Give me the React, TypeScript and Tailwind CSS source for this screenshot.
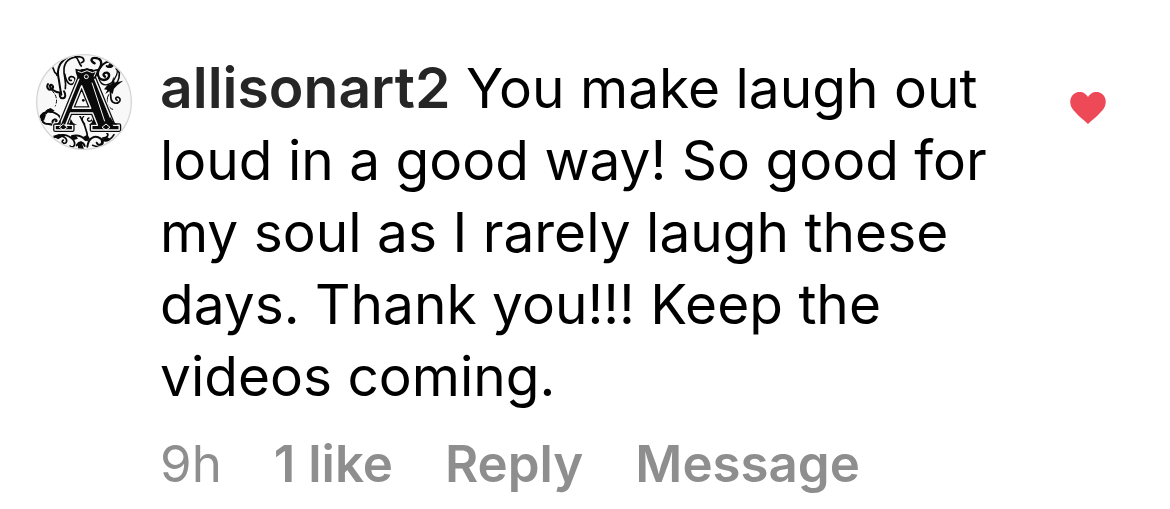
const actions = ["1 like", "Reply", "Message"];

function Avatar() {
  return (
    <svg
      viewBox="18 18 288 288"
      className="mt-0.5 size-24 shrink-0"
      role="img"
      aria-label="allisonart2"
    >
      <defs>
        <clipPath id="avatar-circle">
          <circle cx="162" cy="162" r="141" />
        </clipPath>
      </defs>
      <circle cx="162" cy="162" r="142" fill="#f8f8f8" />
      <g clipPath="url(#avatar-circle)">
        <g fill="none" stroke="#0a0a0a" strokeWidth="5" strokeLinecap="round">
          {/* top left stem and curls */}
          <path d="M146 26C118 28 104 42 102 62C100 84 110 98 106 122" />
          <path d="M116 26C86 42 80 66 86 92C89 108 90 122 94 140" strokeWidth="6" />
          <path d="M104 78C110 110 124 114 132 104C140 94 132 84 122 86C114 89 116 99 124 97" />
          <path d="M92 132C86 140 90 152 99 151C108 149 107 138 102 130" strokeWidth="6" />
          <path d="M66 56C70 60 71 64 73 70C74 76 82 76 81 82" />
          <path d="M90 134C72 132 58 120 60 112C64 106 74 116 66 123C56 130 48 118 54 108" strokeWidth="6" />
          <path d="M66 128C82 144 82 160 76 174" strokeWidth="3" strokeDasharray="9 7" />
          <path d="M146 26C164 28 166 40 154 44M136 26C148 34 146 48 154 54" />
          {/* right branch */}
          <path d="M194 46C178 38 184 28 198 30C218 32 216 52 208 62C198 80 206 96 222 96C238 95 242 78 231 74C221 73 217 82 225 86" strokeWidth="7" />
          <path d="M210 60C220 44 236 36 246 46C248 56 236 60 230 54" strokeWidth="6" />
          <path d="M206 90C214 120 242 114 254 92C264 76 266 68 258 62" strokeWidth="4" />
          <path d="M268 78C268 98 262 106 248 112M238 118C248 140 236 152 248 162C262 172 276 158 268 150C261 143 252 152 261 157" />
          <path d="M236 140C224 162 236 182 248 184" strokeWidth="3" />
          {/* left scroll */}
          <path d="M30 208C42 188 62 186 80 198C98 208 92 230 78 232C66 231 64 217 74 214C80 214 82 220 77 221" strokeWidth="6" />
          <path d="M34 214C46 240 62 218 76 238M48 196C54 180 64 184 64 192" strokeWidth="6" />
          {/* thin stem below the crossbar */}
          <path d="M144 194C160 222 172 244 174 278" />
          <path d="M164 228C150 216 158 204 168 200C182 196 194 208 184 218C174 224 168 212 177 210" strokeWidth="4" />
          {/* bottom scrolls */}
          <path d="M66 274C88 252 116 260 130 276C140 292 128 302 120 294M88 262C106 264 114 276 108 284C100 290 92 280 100 276" />
          <path d="M126 264C144 260 158 266 166 276M140 292C150 278 160 282 164 294M172 296C176 268 196 260 212 272C224 286 206 298 200 284" strokeWidth="6" />
          <path d="M188 292C212 302 222 290 218 276C230 284 244 274 252 260M218 270C232 270 238 262 230 254" />
        </g>
        <g fill="#0a0a0a">
          <path d="M232 58C238 40 250 36 254 46C252 58 242 64 232 58ZM222 124L232 112L244 108L250 86L254 104L280 98L262 112L252 122L248 138L238 130L226 138L232 126ZM260 62L274 66L268 82ZM32 200L40 192L48 200L42 218L32 216ZM46 188L62 180L74 188L60 194ZM68 264L88 258L98 266L84 274ZM120 266L136 260L144 272L132 276ZM158 268L172 260L180 272L168 280ZM216 272L230 266L240 272L226 280ZM246 228L276 230L272 246L258 252L244 246ZM144 286L154 280L162 304L144 304Z" />
        </g>
        {/* ornamental initial: dark edge, light inline, dark face */}
        <g
          fontFamily="'DejaVu Serif', serif"
          fontWeight="bold"
          fontSize="242"
          textAnchor="middle"
          strokeLinejoin="round"
        >
          <text x="171" y="245" fill="#0a0a0a" stroke="#f8f8f8" strokeWidth="18">A</text>
          <text x="171" y="245" fill="#0a0a0a" stroke="#0a0a0a" strokeWidth="12">A</text>
          <text x="171" y="245" fill="#0a0a0a" stroke="#f8f8f8" strokeWidth="4">A</text>
        </g>
        {/* cap on the apex and flares above the feet */}
        <path d="M136 62L154 66L171 60L188 66L206 62L204 76L196 92L144 92L138 76Z" fill="#0a0a0a" />
        <path d="M92 212L84 226L70 230L92 230ZM122 212L130 226L142 230L118 230ZM190 212L184 226L176 230L200 230ZM240 206L250 222L264 230L240 230Z" fill="#0a0a0a" />
        <g fill="none" stroke="#f8f8f8" strokeWidth="3">
          <path d="M186 104L224 220" />
          <path d="M143 70L155 74L171 68L187 74L199 70L192 86" />
          <circle cx="169" cy="86" r="6" />
          <path d="M88 238L100 228L112 238L100 246ZM216 238L228 228L240 238L228 246Z" />
        </g>
        <circle cx="160" cy="157" r="4" />
      </g>
      <circle cx="162" cy="162" r="142" fill="none" stroke="#d6d6d6" strokeWidth="4" />
    </svg>
  );
}

export default function App() {
  return (
    <article className="flex items-start bg-white pl-9 pr-16 pt-[52px] font-['Inter',sans-serif]">
      <Avatar />

      <div className="ml-7 min-w-0 max-w-[840px] flex-1">
        <p className="text-[55px] leading-[72px] text-black">
          <a href="#allisonart2" className="text-[57px] leading-none font-semibold text-[#262626]">
            allisonart2
          </a>{" "}
          <span>
            You make laugh out loud in a good way! So good for my soul as I
            rarely laugh these days. Thank you!!! Keep the videos coming.
          </span>
        </p>

        <div className="mt-4 flex items-center gap-[52px] text-[51px] leading-[72px] text-[#8e8e8e]">
          <time className="font-normal">9h</time>
          {actions.map((action) => (
            <button key={action} type="button" className="font-semibold">
              {action}
            </button>
          ))}
        </div>
      </div>

      <button type="button" aria-label="Unlike" className="ml-auto mt-10 shrink-0">
        <svg viewBox="0 0 38 32" className="h-8 w-9" fill="#ed4956" preserveAspectRatio="none">
          <path d="M19 32C16 29 6 22 2 16C-1 11 0 5 4 2C9 -2 16 0 19 5C22 0 29 -2 34 2C38 5 39 11 36 16C32 22 22 29 19 32Z" />
        </svg>
      </button>
    </article>
  );
}
